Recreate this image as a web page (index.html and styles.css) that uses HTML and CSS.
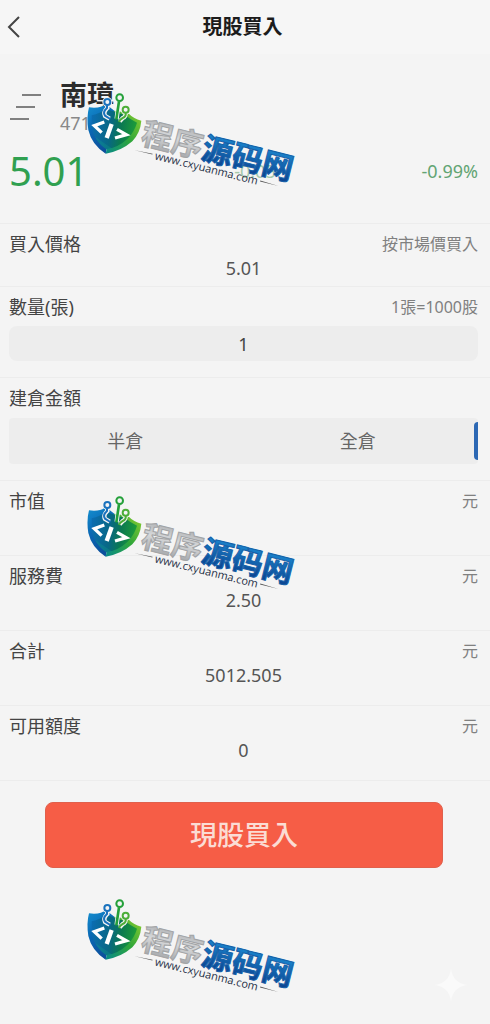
FILE: index.html
```
<!DOCTYPE html>
<html lang="zh-Hant">
<head>
    <meta charset="UTF-8">
    <meta name="viewport" content="width=device-width, initial-scale=1.0">
    <title>現股買入</title>
    <link rel="stylesheet" href="styles.css">
</head>
<body>
    <header class="topbar">
        <button class="back" type="button" aria-label="返回">
            <svg width="14" height="24" viewBox="0 0 14 24"><path d="M12 2 L2 12 L12 22"/></svg>
        </button>
        <h1>現股買入</h1>
    </header>
    <main>
        <section class="stock">
            <div class="stock-head">
                <svg class="lines" width="34" height="28" viewBox="0 0 34 28"><path d="M13 2 H32 M7 14 H26 M1 26 H20"/></svg>
                <div>
                    <h2>南璋</h2>
                    <p class="code">4712</p>
                </div>
            </div>
            <div class="quote">
                <span class="price">5.01</span>
                <span class="change">-0.05</span>
                <span class="percent">-0.99%</span>
            </div>
        </section>
        <form>
            <div class="row row-short">
                <div class="row-head">
                    <span class="label">買入價格</span>
                    <span class="hint">按市場價買入</span>
                </div>
                <div class="value">5.01</div>
            </div>
            <div class="row">
                <div class="row-head">
                    <label class="label" for="amount">數量(張)</label>
                    <span class="hint">1張=1000股</span>
                </div>
                <input class="amount" type="text" id="amount" value="1">
            </div>
            <div class="row">
                <div class="row-head">
                    <span class="label">建倉金額</span>
                </div>
                <div class="segments">
                    <button type="button">半倉</button>
                    <button type="button">全倉</button>
                    <span class="marker"></span>
                </div>
            </div>
            <div class="row row-total">
                <div class="row-head">
                    <span class="label">市值</span>
                    <span class="hint">元</span>
                </div>
                <div class="value"></div>
            </div>
            <div class="row row-total">
                <div class="row-head">
                    <span class="label">服務費</span>
                    <span class="hint">元</span>
                </div>
                <div class="value">2.50</div>
            </div>
            <div class="row row-total">
                <div class="row-head">
                    <span class="label">合計</span>
                    <span class="hint">元</span>
                </div>
                <div class="value">5012.505</div>
            </div>
            <div class="row row-total">
                <div class="row-head">
                    <span class="label">可用額度</span>
                    <span class="hint">元</span>
                </div>
                <div class="value">0</div>
            </div>
            <button class="submit" type="submit">現股買入</button>
        </form>
    </main>

    <!-- shared watermark parts -->
    <svg class="defs" width="0" height="0">
        <defs>
            <linearGradient id="blueSide" x1="0" y1="0" x2="0.4" y2="1">
                <stop offset="0" stop-color="#1590d0"/>
                <stop offset="0.5" stop-color="#0a68b4"/>
                <stop offset="1" stop-color="#0c4f9c"/>
            </linearGradient>
            <linearGradient id="greenSide" x1="1" y1="0" x2="0" y2="1">
                <stop offset="0" stop-color="#8fcf2e"/>
                <stop offset="0.5" stop-color="#2fa63a"/>
                <stop offset="1" stop-color="#078a8a"/>
            </linearGradient>
            <linearGradient id="inner" x1="0" y1="0" x2="1" y2="0.1">
                <stop offset="0" stop-color="#0c6db4"/>
                <stop offset="0.45" stop-color="#086884"/>
                <stop offset="0.7" stop-color="#0b7a50"/>
                <stop offset="1" stop-color="#1c9a3a"/>
            </linearGradient>
            <linearGradient id="silver" x1="0" y1="0" x2="0" y2="1">
                <stop offset="0" stop-color="#9a9c9f"/>
                <stop offset="0.5" stop-color="#d6d8da"/>
                <stop offset="1" stop-color="#97999c"/>
            </linearGradient>
            <linearGradient id="blueText" x1="0" y1="0" x2="0" y2="1">
                <stop offset="0.2" stop-color="#1a86cf"/>
                <stop offset="0.9" stop-color="#0b3f8c"/>
            </linearGradient>
            <symbol id="shield" viewBox="0 0 690 360">
                <path fill="url(#blueSide)" d="M42 82 Q78 86 92 72 L118 92 L92 221 Q50 194 40 150 Q34 112 42 82 Z"/>
                <path fill="url(#greenSide)" d="M118 92 L158 98 Q176 116 199 122 Q196 158 172 184 Q138 214 92 221 Z"/>
                <path fill="url(#inner)" d="M50 106 Q76 100 92 86 L150 106 Q168 120 186 128 Q178 156 158 176 Q130 202 94 208 Q60 184 50 146 Z"/>
                <path fill="#12a08a" opacity="0.3" d="M60 170 L112 206 L94 208 Q72 194 60 170 Z"/>
                <g fill="none" stroke="#f4f4f4" stroke-width="13">
                    <path d="M97 70 V84 Q84 96 90 108 L104 116 M132 58 L125 116 M152 92 Q154 110 143 114 L134 124"/>
                </g>
                <g fill="#f4f4f4">
                    <circle cx="97" cy="66" r="15"/>
                    <circle cx="134" cy="53" r="16"/>
                    <circle cx="152" cy="89" r="15"/>
                </g>
                <g fill="none" stroke-width="6">
                    <g stroke="#1a72bd">
                        <circle cx="97" cy="66" r="9"/>
                        <path d="M96 76 V84 Q82 96 90 107 L106 117"/>
                    </g>
                    <g stroke="#24a03a">
                        <circle cx="134" cy="53" r="10"/>
                        <path stroke-width="8" d="M132 64 L124 118"/>
                    </g>
                    <g stroke="#4cae38">
                        <circle cx="152" cy="89" r="9"/>
                        <path d="M152 98 Q154 110 143 114 Q134 118 132 126"/>
                    </g>
                </g>
                <g fill="none" stroke="#fff" stroke-width="10">
                    <path d="M88 126 L58 137 L80 158 M126 148 L154 164 L120 174"/>
                    <path stroke-width="13" d="M110 132 L95 174"/>
                </g>
            </symbol>
        </defs>
    </svg>
    <div class="watermarks">
        <svg class="watermark" viewBox="0 0 230 120">
            <use href="#shield" width="230" height="120"/>
            <g transform="translate(64 62) rotate(14)">
                <text class="brand" x="1" y="1"><tspan class="silver">程序</tspan><tspan class="blue">源码网</tspan></text>
                <text class="site" x="19" y="13">www.cxyuanma.com</text>
                <path class="rule" d="M-2 9 L16 8 V9 Z M127 8 V9 L146 9 Z"/>
            </g>
        </svg>
        <svg class="watermark" viewBox="0 0 230 120">
            <use href="#shield" width="230" height="120"/>
            <g transform="translate(64 62) rotate(14)">
                <text class="brand" x="1" y="1"><tspan class="silver">程序</tspan><tspan class="blue">源码网</tspan></text>
                <text class="site" x="19" y="13">www.cxyuanma.com</text>
                <path class="rule" d="M-2 9 L16 8 V9 Z M127 8 V9 L146 9 Z"/>
            </g>
        </svg>
        <svg class="watermark" viewBox="0 0 230 120">
            <use href="#shield" width="230" height="120"/>
            <g transform="translate(64 62) rotate(14)">
                <text class="brand" x="1" y="1"><tspan class="silver">程序</tspan><tspan class="blue">源码网</tspan></text>
                <text class="site" x="19" y="13">www.cxyuanma.com</text>
                <path class="rule" d="M-2 9 L16 8 V9 Z M127 8 V9 L146 9 Z"/>
            </g>
        </svg>
    </div>
    <svg class="sparkle" viewBox="0 0 32 32"><path d="M16 0 Q18 14 32 16 Q18 18 16 32 Q14 18 0 16 Q14 14 16 0 Z"/></svg>
</body>
</html>
```
FILE: styles.css
```
* {
    box-sizing: border-box;
}
body {
    position: relative;
    min-height: 100vh;
    margin: 0;
    background: #f4f4f4;
    color: #444;
    font-family: "Noto Sans", "Noto Sans CJK TC", sans-serif;
    font-size: 18px;
    line-height: 24px;
}
h1, h2, p {
    margin: 0;
}
button, input {
    font: inherit;
    color: inherit;
    border: 0;
    padding: 0;
}
.topbar {
    display: grid;
    grid-template-columns: 40px 1fr 40px;
    align-items: center;
    height: 54px;
    padding: 0 12px 0 7px;
    background: #f6f6f6;
}
.topbar h1 {
    font-size: 20px;
    font-weight: 600;
    color: #1c1c1c;
    text-align: center;
}
.back {
    display: flex;
    background: none;
}
.back path {
    fill: none;
    stroke: #444;
    stroke-width: 2;
}
.stock {
    height: 169px;
    padding: 25px 12px 0 9px;
}
.stock-head {
    display: flex;
    gap: 17px;
    align-items: center;
}
.stock-head h2 {
    font-size: 27px;
    line-height: 32px;
    font-weight: 600;
    color: #2c2c2c;
}
.lines path {
    stroke: #808080;
    stroke-width: 2;
}
.code {
    color: #888;
}
.quote {
    display: flex;
    justify-content: space-between;
    align-items: center;
    padding-top: 12px;
    line-height: 48px;
}
.price {
    font-size: 40px;
    color: #30a050;
}
.change {
    color: #a4c8aa;
}
.percent {
    color: #62a473;
}
.row {
    padding: 8px 12px 16px 9px;
    border-top: 1px solid #ececec;
}
.row-short {
    padding-bottom: 6px;
}
.row-total {
    padding-bottom: 18px;
}
.row-head {
    display: flex;
    justify-content: space-between;
}
.hint {
    font-size: 16px;
    color: #808080;
}
.value {
    min-height: 24px;
    text-align: center;
    color: #555;
}
.amount {
    display: block;
    width: 100%;
    height: 35px;
    margin-top: 7px;
    border-radius: 8px;
    background: #ededed;
    text-align: center;
}
.segments {
    display: flex;
    align-items: center;
    height: 46px;
    margin-top: 8px;
    border-radius: 4px;
    background: #ededed;
    color: #666;
}
.segments button {
    flex: 1;
    height: 100%;
    background: none;
}
.marker {
    width: 4px;
    height: 38px;
    border-radius: 4px 0 0 4px;
    background: #2c68b4;
}
.row-total:last-of-type {
    border-bottom: 1px solid #ececec;
}
.submit {
    display: block;
    width: calc(100% - 92px);
    height: 66px;
    margin: 21px 47px 0 45px;
    border: 1px solid #e0604c;
    border-radius: 8px;
    background: #f65d46;
    color: #fbdcd4;
    font-size: 27px;
    font-weight: 500;
}
.defs {
    position: absolute;
}
/* watermark overlay */
.watermarks {
    position: absolute;
    top: 80px;
    left: 75px;
    display: flex;
    flex-direction: column;
    gap: 283px;
    pointer-events: none;
}
.watermark {
    width: 230px;
    height: 120px;
}
.brand {
    font-family: "Noto Sans CJK SC", sans-serif;
    font-size: 31px;
    font-weight: 700;
}
.silver {
    fill: url(#silver);
    stroke: #a2a4a6;
    stroke-width: 1;
}
.blue {
    fill: url(#blueText);
    stroke: #1560a8;
    stroke-width: 1;
}
.site {
    font-family: "Open Sans", sans-serif;
    font-size: 11px;
    font-weight: 500;
    fill: #1f2f45;
}
.rule {
    fill: #555;
}
.sparkle {
    position: absolute;
    right: 23px;
    bottom: 23px;
    width: 32px;
    height: 32px;
    fill: #fafafa;
}
```
